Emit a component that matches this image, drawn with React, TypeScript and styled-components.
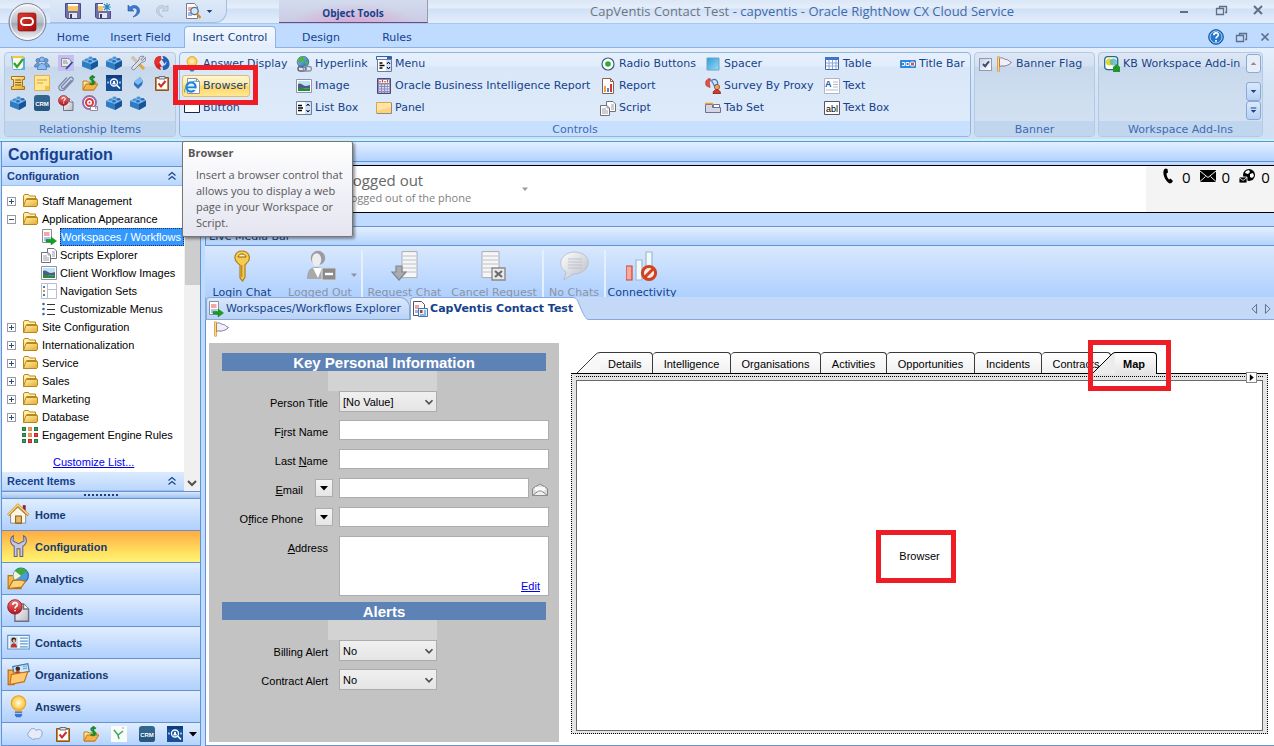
import React from "react";
import styled, { createGlobalStyle, css } from "styled-components";

const UI = `"DejaVu Sans", Verdana, sans-serif`;
const SEGOE = `"Open Sans", "Segoe UI", sans-serif`;
const ARIAL = `"Liberation Sans", Arial, sans-serif`;

const Global = createGlobalStyle`
  *, *::before, *::after { box-sizing: border-box; }
  body { margin: 0; background: #bfdbff; font-family: ${ARIAL}; font-size: 11px; color: #000; }
  button, input, select, textarea { font: inherit; color: inherit; margin: 0; }
  button { background: none; border: 0; padding: 0; cursor: default; white-space: nowrap; }
  ul { list-style: none; margin: 0; padding: 0; }
  h1, h2, p { margin: 0; }
`;

/* ---------- icons ---------- */

const HiddenSvg = styled.svg`
  position: absolute;
`;
const Defs = () => (
  <HiddenSvg width="0" height="0" aria-hidden="true">
    <defs>
      <linearGradient id="gGold" x1="0" y1="0" x2="1" y2="1"><stop offset="0" stopColor="#fff3b0" /><stop offset="1" stopColor="#e5a82e" /></linearGradient>
      <linearGradient id="gBlue" x1="0" y1="0" x2="1" y2="1"><stop offset="0" stopColor="#8ecbf7" /><stop offset="1" stopColor="#1f63b8" /></linearGradient>
      <linearGradient id="gSky" x1="0" y1="0" x2="1" y2="1"><stop offset="0" stopColor="#2f9bd8" /><stop offset="1" stopColor="#9bdcf8" /></linearGradient>
      <linearGradient id="gRed" x1="0" y1="0" x2="0" y2="1"><stop offset="0" stopColor="#f08078" /><stop offset="1" stopColor="#b4101c" /></linearGradient>
      <linearGradient id="gGray" x1="0" y1="0" x2="1" y2="1"><stop offset="0" stopColor="#ffffff" /><stop offset="1" stopColor="#b9bbc6" /></linearGradient>
      <linearGradient id="gOrb" x1="0" y1="0" x2="0" y2="1"><stop offset="0" stopColor="#f4f5f7" /><stop offset="0.5" stopColor="#b9bec8" /><stop offset="0.55" stopColor="#a2a7b3" /><stop offset="1" stopColor="#f8fafc" /></linearGradient>
      <linearGradient id="gOra" x1="0" y1="0" x2="1" y2="1"><stop offset="0" stopColor="#e23a30" /><stop offset="1" stopColor="#a30d0a" /></linearGradient>
      <radialGradient id="gBulb"><stop offset="0" stopColor="#fffbe0" /><stop offset="1" stopColor="#ffc234" /></radialGradient>
    </defs>
  </HiddenSvg>
);

const brick = (
  <>
    <path d="M0 6 8 2.500 16 5.500V11L9 15 0 11.500Z" fill="#2f7cc4" />
    <path d="M0 6 8 2.500 16 5.500 9 9Z" fill="#7db9ec" />
    <path d="M9 9 16 5.500V11L9 15Z" fill="#1a5596" />
    <ellipse cx="4.500" cy="4.800" rx="2" ry="1.300" fill="#4a94d6" /><ellipse cx="8.500" cy="2.800" rx="2" ry="1.300" fill="#4a94d6" />
    <ellipse cx="8" cy="6.300" rx="2" ry="1.300" fill="#2b70b5" /><ellipse cx="12.500" cy="4.300" rx="2" ry="1.300" fill="#2b70b5" />
  </>
);
const docs = (
  <>
    <path d="M6.500 1.500H13L15.500 4V11.500H6.500Z" fill="#fff" stroke="#70707c" />
    <path d="M11 5h3M11 7h3M11 9h3" stroke="#9a9aa6" />
    <path d="M.5 5.500H7L9.500 8V15.500H.5Z" fill="#fff" stroke="#70707c" />
    <path d="M2 9h4M2 11h6M2 13h6M7 5.500V8h2.500" stroke="#9a9aa6" fill="none" />
  </>
);
const picture = (
  <>
    <path d="M.5 1.500h15v13H.5Z" fill="#fff" stroke="#8d94b0" />
    <path d="M2 3h12v10H2Z" fill="#bfe3f7" />
    <path d="M2 6c3-2 5 2 8 2 2 0 3-1 4-1v3H2Z" fill="#4f5a88" /><path d="M2 9.500c4 0 8 1.500 12 .5v3H2Z" fill="#2d8a3c" />
  </>
);
const clipboard = (
  <>
    <path d="M1.500 2.500h13v13h-13Z" fill="#c98a45" stroke="#8f5720" /><path d="M3 4h10v10H3Z" fill="#fff" />
    <path d="M5 1.500h6V4H5Z" fill="#dfe2ea" stroke="#6d7080" /><path d="M4.500 8.500 7 11.500 11.500 6" fill="none" stroke="#cf2b2b" strokeWidth="2" />
  </>
);
const crm = (
  <>
    <rect width="16" height="16" rx="3" fill="#33668f" /><path d="M0 8h16v5a3 3 0 0 1-3 3H3a3 3 0 0 1-3-3Z" fill="#28587f" />
    <text x="8" y="10.500" fontFamily="Liberation Sans" fontWeight="bold" fontSize="6" fill="#fff" textAnchor="middle">CRM</text>
  </>
);
const dollar = (
  <>
    <path d="M1 6h4l1 1h8l-2 8H1Z" fill="url(#gGold)" stroke="#c07f1c" /><path d="M4 9h12l-4 6H1Z" fill="#f7b04a" stroke="#c07f1c" />
    <path d="M13 2.500C9 .5 7 3 9 4.500s4 1.500 3 3.500-3 1.500-4.500.5M10.500 0v10" fill="none" stroke="#1d8a2c" strokeWidth="1.800" />
  </>
);
const lens = (
  <>
    <rect width="16" height="16" fill="#17509a" /><path d="M0 0h16v3H0Z" fill="#0f3d80" />
    <circle cx="8" cy="7.500" r="3.500" fill="none" stroke="#fff" strokeWidth="1.300" /><circle cx="8" cy="7" r="1.200" fill="#fff" /><path d="M6 9.500a2 2 0 0 1 4 0" fill="#fff" />
    <path d="M10.500 10 14 13.500" stroke="#fff" strokeWidth="1.600" /><path d="M1 7.500h2M13 7.500h2" stroke="#8fc0ef" strokeWidth="2" />
  </>
);
const incident = (
  <>
    <path d="M5.500 3.500h6L15 7v8.500H5.500Z" fill="url(#gGray)" stroke="#6f7080" /><path d="M11.500 3.500V7H15" fill="#fff" stroke="#6f7080" />
    <circle cx="5.500" cy="5.500" r="5" fill="url(#gRed)" stroke="#8d1018" strokeWidth=".6" />
    <path d="M4 4.200C4 2 7.200 2 7.200 4 7.200 5.200 5.600 5.200 5.600 6.600M5.600 7.600v1" fill="none" stroke="#fff" strokeWidth="1.100" />
  </>
);
const bulb = (
  <>
    <circle cx="8" cy="5.500" r="5" fill="url(#gBulb)" stroke="#eba21c" strokeWidth=".8" />
    <path d="M5.500 9.500h5v2h-5Z" fill="#f3b334" /><path d="M5.500 11.500h5V14l-1 1.500h-3l-1-1.500Z" fill="#4374c4" /><path d="M5.500 12.800h5" stroke="#b7cdf0" strokeWidth=".7" />
  </>
);
const flag = (
  <>
    <path d="M3.500 2.500c3-2 4 1 7 1 1.500 0 2 1.500 5 3-2 2-3 2.500-5 3-3 1.500-4-.5-7 1Z" fill="#f1effa" stroke="#7b7898" />
    <path d="M2.500.5v15" stroke="#d08a1e" strokeWidth="2.400" /><path d="M2.500 1v14" stroke="#ffd67a" strokeWidth="1" />
  </>
);
const wsArrow = (
  <>
    <path d="M1.500.500h9v13h-9Z" fill="#fff" stroke="#8a8fa8" /><path d="M3 3h5.500v4H3Z" fill="#f4a6a6" /><path d="M3 8h6v4H3Z" fill="#a9c6ee" />
    <path d="M5 10.500h5V8l5.500 4-5.500 4v-3H5Z" fill="#18a022" stroke="#0c7a15" strokeWidth=".5" />
  </>
);
const folder = (
  <>
    <path d="M1.500 12V3l1-1.500h4l1 1.500h6V6" fill="#fff0b0" stroke="#b88718" /><path d="M1.500 4.500v9h13v-8h-10" fill="#fde28a" stroke="#b88718" /><path d="M1.500 13.500 4 6.500h11.500v6l-1 1Z" fill="url(#gGold)" stroke="#b88718" />
  </>
);
const floppy = (
  <>
    <path d="M.5.500h15v15H2L.5 14Z" fill="#6f6fa8" stroke="#4b4b86" /><path d="M3 1h10v7H3Z" fill="#f9c764" /><path d="M3 1h10v2H3Z" fill="#fff" /><path d="M4 10h8v5H4Z" fill="#e6e6f2" /><path d="M5 11h2v4H5Z" fill="#3b3b66" />
  </>
);

const glyphs: Record<string, React.ReactNode> = {
  brick, docs, picture, clipboard, crm, dollar, lens, incident, bulb, flag, wsArrow, folder, floppy,
  floppyStar: (<>{floppy}<path d="M8 0h8v8H8Z" fill="#e8f3fb" /><path d="M9 1l6 6M15 1 9 7M12 0v8M8 4h8" stroke="#2e86c1" strokeWidth="1.200" /></>),
  undo: <path d="M3 2v6h6L6.800 6C9 4 12.500 5 12 8.500 11.700 11 10 12 8 14c5-1.500 7-4 6.500-7C14 2.500 8.500 1 5 4.200Z" fill="#3c7bd6" stroke="#1f55a8" strokeWidth=".6" />,
  redo: <path d="M13 2v6H7l2.200-2C7 4 3.500 5 4 8.500 4.300 11 6 12 8 14 3 12.500 1 10 1.500 7 2 2.500 7.500 1 11 4.200Z" fill="#ccd5e4" stroke="#a9b4c8" strokeWidth=".6" />,
  preview: (<><path d="M1.500.500h8L12.500 4v11.500h-11Z" fill="#fff" stroke="#7a7a8c" /><path d="M3 4h5v4H3Z" fill="#f5a8a8" /><path d="M3 9h4v4H3Z" fill="#9db7e6" /><circle cx="9.500" cy="8" r="3.700" fill="#cfe8fa" stroke="#60708c" strokeWidth="1.300" /><path d="m12 11 3.500 4" stroke="#d68a2a" strokeWidth="2.400" /></>),
  checklist: (<><path d="M1 1h12l2 2v12H3Z" fill="#5aaee0" /><path d="M3 3h10v9l-2 2H3Z" fill="#fdfae0" /><path d="M2 1h12v2H2Z" fill="#e8c94c" /><path d="m4 8 3 4 6-8" fill="none" stroke="#2fa236" strokeWidth="2.200" /></>),
  people: (<g fill="#6d9ed6" stroke="#386ba8" strokeWidth=".7"><circle cx="4" cy="5.500" r="2" /><circle cx="12" cy="5.500" r="2" /><path d="M.5 12c0-5 6-5 6.500 0ZM9 12c0-5 6.500-5 6.500 0Z" /><circle cx="8" cy="4.500" r="2.500" fill="#8fbdf0" /><path d="M3.500 14.500c0-8 9-8 9 0Z" fill="#8fbdf0" /></g>),
  draft: (<><rect width="16" height="16" fill="#c6bdf2" /><path d="M3.500 3.500h6c5 0 5 8 0 8h-6Z" fill="#e9e9ee" stroke="#8c8c98" /><path d="M5 6h4M5 8h5" stroke="#8c8c98" /><path d="m8 14 6.500-7" stroke="#2c4a9e" strokeWidth="1.800" /></>),
  tools: (<><path d="m2 2 12 12" stroke="#e0a93c" strokeWidth="3" /><path d="m2 2 6 6" stroke="#c4c9d4" strokeWidth="2" /><path d="M14 1.500 11 4.500l1.500 1 3-3c1 3-1 5-3.500 4.500L5 14c-2 2-4 0-3-2l7-7C8.500 2 11 .5 14 1.500Z" fill="#d9dee6" stroke="#6a7280" strokeWidth=".8" /></>),
  swirl: (<><path d="M7 1C1 1-.5 6 1 10c1 3 3.500 4.500 6 5L6 12h2L5 7 2 12h2C2.500 8 4 5 7.500 5Z" fill="#d72020" /><path d="M7 1C1 1-.5 6 1 10.500 3 10 5 8 7 5Z" fill="#e03030" /><path d="M9 15c6 0 7.500-5 6-9C14 3 11.500 1 8.500 1L9.500 4h-2l3 5 3.500-5h-2c1.500 4-.5 7-3.500 7Z" fill="#2360b8" /></>),
  scroll: (<><path d="M1.500 1.500h13v3h-2v7h2v3h-13v-3h2v-7h-2Z" fill="url(#gGold)" stroke="#a97312" /><path d="M5 5h6M5 7.500h6M5 10h6" stroke="#8a5d0f" /></>),
  note: (<><path d="M.5.500h15v15H.5Z" fill="#ffe691" stroke="#e5b04a" /><path d="M3 5h10M3 8h6" stroke="#d9a23c" /><path d="M11 11h4v4h-4Z" fill="#f7c04a" /></>),
  clip: <path d="M13.500 5 6 13c-1.500 1.500-3.500-.5-2-2l7.500-8c2-2 5 .5 3 3L6.500 14.500C3 17.500-1.500 13 2 10l7-7.500" fill="none" stroke="#7e84a6" strokeWidth="1.200" />,
  diamond: (<><path d="m4 7 6-5 3 4-1 4-4 4-4-4Z" fill="#2a72c4" /><path d="m4 7 6-5 3 4-5 4Z" fill="#7fbcf0" /></>),
  target: (<><circle cx="7.500" cy="7.500" r="6.500" fill="#fff" stroke="#9d6aa8" strokeWidth="2" /><circle cx="7.500" cy="7.500" r="3.500" fill="#fff" stroke="#d93a3a" strokeWidth="2" /><circle cx="7.500" cy="7.500" r="1" fill="#d93a3a" /><path d="M8.500 11.500h7v4h-7Z" fill="#fff" stroke="#8a8a96" /><path d="M13 12.500h1.500v1H13Z" fill="#d22" /></>),
  browser: (<><path d="M3.500.500h9l3 3v12h-12Z" fill="#fff" stroke="#8a92a8" /><path d="M12.500.500v3h3" fill="none" stroke="#8a92a8" /><circle cx="7" cy="9" r="4.600" fill="#dff2fd" stroke="#1f86d4" strokeWidth="2.300" /><path d="M3 9.300h8.500" stroke="#1f86d4" strokeWidth="1.800" /><path d="M9.500 10.500H13v1.600h-3.500Z" fill="#fff" /><path d="M.8 14.500C-1 11 6 2.500 13 3" fill="none" stroke="#3f9be0" strokeWidth="1" /></>),
  button: <path d="M.5 3.500h15v9H.5Z" fill="#fff" stroke="#17284f" />,
  hyperlink: (<><circle cx="7" cy="6" r="5.800" fill="url(#gBlue)" stroke="#28518c" strokeWidth=".6" /><path d="M3 2c2-1.500 5-1 6 0L8 5 4 7 2 6ZM9 6l3-1v3l-2 2Z" fill="#4cb648" /><rect x="2" y="10.500" width="8" height="4.500" rx="2.200" fill="none" stroke="#5d6577" strokeWidth="1.400" /><rect x="7.500" y="10.500" width="8" height="4.500" rx="2.200" fill="none" stroke="#8b93a5" strokeWidth="1.400" /></>),
  list: (<><path d="M.5 1.500h15v13H.5Z" fill="#fff" stroke="#6f7c98" /><path d="M9 2h6v12H9Z" fill="#cfe0fa" /><path d="M2 5.500h4M2 8h5M2 10.500h4" stroke="#000" strokeWidth="1.300" /><path d="m10.500 6 1.500-2 1.500 2M10.500 10l1.500 2 1.500-2" fill="none" stroke="#000" /></>),
  menu: (<><path d="M.5.500h15v3H.5Z" fill="#eaf3ff" stroke="#2d62a8" /><path d="M11 1h4.500v2H11Z" fill="#2d62a8" /><path d="M1.500 3.500h14v12h-14Z" fill="#fff" stroke="#6f7c98" /><path d="M10 4h5v11h-5Z" fill="#cfe0fa" /><path d="M3.500 7h3M3.500 9.500h5M3.500 12h3" stroke="#000" strokeWidth="1.500" /><path d="m11 8 1.500-2L14 8M11 11l1.500 2 1.500-2" fill="none" stroke="#000" /></>),
  calc: (<><path d="M1.500.500h13v15h-13Z" fill="#8e8bbd" stroke="#4d4a78" /><path d="M3 2h10v3H3Z" fill="#fff" /><path d="M4 4.500V3M6.500 4.500V2M9 4.500V3M11.500 4.500V2" stroke="#d2502e" strokeWidth="1.300" /><path d="M4 6.500v8M7 6.500v8M10 6.500v8M12.500 6.500v8" stroke="#f4f4fc" strokeWidth="1.500" strokeDasharray="1.500 1" /></>),
  panel: (<><path d="M.5 2.500h15v11H.5Z" fill="#ffd37a" stroke="#dfa345" /><path d="M1 3h14v4L1 11Z" fill="#ffe4a8" /><path d="M1 13.500h14.500V3" fill="none" stroke="#8c8a92" /></>),
  radio: (<><circle cx="8" cy="8" r="6" fill="#fdfefd" stroke="#3f5f7a" strokeWidth="1.200" /><circle cx="8" cy="8" r="2.800" fill="#2faa35" /></>),
  report: (<><path d="M2.500.500h8l3 3v12h-11Z" fill="#fff" stroke="#8d5f50" /><path d="M10.500.500v3h3" fill="none" stroke="#8d5f50" /><path d="M4 8h2v6H4Z" fill="#f0a03c" /><path d="M7 10h2v4H7Z" fill="#4e86d2" /><path d="M10 6h2v8h-2Z" fill="#cf3b33" /></>),
  spacer: <path d="M2 2h12v12H2Z" fill="url(#gSky)" stroke="#6aa4c8" />,
  survey: (<><path d="M5 .5C1 .5-.5 5 1.500 8L5 9.500 4.500 6C4 4 5 3 6 2.500Z" fill="#e0524a" stroke="#b02820" strokeWidth=".6" /><path d="M7 2c4-2 7 2 5 5L9 7.500C9 5 6 5 7 2Z" fill="#cfe0fa" stroke="#3c78ca" strokeWidth="1.200" /><circle cx="12" cy="9" r="2.600" fill="#e8a070" stroke="#8d4a1c" strokeWidth=".8" /><path d="M8 15.500c0-5 7.500-5 7.500 0Z" fill="#d93b2a" stroke="#7c1d12" strokeWidth=".8" /></>),
  tabset: (<><path d="M.5 12.500v-8h7v3h8v5Z" fill="#d4d6e6" stroke="#70738e" /><path d="M8.500 7V4.500h6V7" fill="#fff" stroke="#70738e" /><path d="M0 3.500h8" stroke="#f39a2c" strokeWidth="1.500" /></>),
  table: (<><path d="M1.500 1.500h13v12h-13Z" fill="#fff" stroke="#4668a8" /><path d="M1 1h14v3H1Z" fill="#3f76c8" /><path d="M2 7h12M2 10h12M5 4v9M8.500 4v9M12 4v9" stroke="#8da7d8" /></>),
  text: (<><path d="M.5.500h15v15H.5Z" fill="#fff" stroke="#b0b4c6" /><text x="1" y="9" fontFamily="Liberation Sans" fontWeight="bold" fontSize="9" fill="#1b57a6">A</text><path d="M9 4h5M9 6.500h5M9 9h5M2 12h12" stroke="#b6bccd" /></>),
  textbox: (<><path d="M.5 1.500h15v13H.5Z" fill="#fff" stroke="#556" /><text x="8" y="11.500" fontFamily="Liberation Sans" fontSize="9" fill="#000" textAnchor="middle">abl</text></>),
  titlebar: (<><rect y="4" width="16" height="8" rx="1" fill="#2c86e0" /><path d="M2 6.500h2.500v3H2M6 6.500h3v3H6Z" fill="none" stroke="#fff" /><rect x="10.500" y="6" width="4" height="4" rx="1" fill="#e8504a" stroke="#fff" /></>),
  kb: (<><rect x=".7" y=".7" width="13" height="13" rx="3" fill="#fff" stroke="#256b84" strokeWidth="1.300" /><circle cx="5.500" cy="6" r="3.500" fill="#e3d52a" /><circle cx="9.500" cy="6" r="3.500" fill="#4fb4c8" opacity=".8" /><path d="m9 11 3.500-3 3.500 3v5H9Z" fill="#22962c" /></>),
  navset: (<><path d="M.5.500h15v15H.5Z" fill="#fff" stroke="#b9bfd2" /><path d="M6.500 0v16M7 6.500h8" stroke="#b9bfd2" /><path d="M3 3v2M3 11v2" stroke="#4a76c4" strokeWidth="2" /><path d="M3 7v2" stroke="#e39a2c" strokeWidth="2" /></>),
  bullets: (<><g fill="#3c67ad"><circle cx="2.500" cy="3" r="1.300" /><circle cx="2.500" cy="8" r="1.300" /><circle cx="2.500" cy="13" r="1.300" /></g><path d="M6 3.500h8M6 8.500h8M6 13.500h8" stroke="#333" /></>),
  rules: (<g strokeWidth="1.400"><path d="M.7.700h2.600v2.600H.7ZM.7 6.700h2.600v2.600H.7ZM.7 12.700h2.600v2.600H.7ZM12.700.700h2.600v2.600h-2.600ZM12.700 12.700h2.600v2.600h-2.600Z" fill="#a8d8b4" stroke="#1f7a44" /><path d="M6.700.700h2.600v2.600H6.700ZM6.700 6.700h2.600v2.600H6.700Z" fill="#fbd8a8" stroke="#e8884a" /><path d="M12.700 6.700h2.600v2.600h-2.600ZM6.700 12.700h2.600v2.600H6.700Z" fill="#f7a0a0" stroke="#d22222" /></g>),
  home: (<><path d="M11 1.500h2V6h-2Z" fill="#8c2430" /><path d="M2.500 7.500 7.500 3l5.500 5v6H2.500Z" fill="#fdf6e4" stroke="#7b7b86" strokeWidth=".6" /><path d="M.8 8.500 7.500 1.500l7.500 7" fill="none" stroke="#c98a1c" strokeWidth="1.900" /><path d="M.8 8.300 7.500 1.300l7.500 7" fill="none" stroke="#fbe08a" strokeWidth=".8" /><path d="M6 9h4v5H6Z" fill="#e4bd6c" stroke="#8a5a12" strokeWidth=".7" /></>),
  wrench: <path d="M4.500.500C2 1.500 1.500 6 5 7.800V15h2V9.500h2V15h2V7.800C14.500 6 14 1.500 11.500.500l.3 3.700L8 6 4.200 4.200Z" fill="#c5c8de" stroke="#5d6088" strokeWidth=".7" />,
  analytics: (<><path d="M.8 6h4l1 1h4v8h-9Z" fill="#f7b84a" stroke="#b87518" strokeWidth=".8" /><circle cx="9.700" cy="6" r="5.200" fill="#4b9ae0" stroke="#2c6cae" strokeWidth=".8" /><path d="M9.700 6 5.500 2.800a5.200 5.200 0 0 1 8.400 0Z" fill="#3cab3c" /><path d="M9.700 6 5.500 2.800A5.200 5.200 0 0 0 5.500 9Z" fill="#f0f4d8" /><path d="M4 9.500 9 9l4 1-3 4-9 1Z" fill="#ffd27a" stroke="#b87518" strokeWidth=".8" /></>),
  contacts: (<><path d="M.5 3h15v9.500H.5Z" fill="#f6fbff" stroke="#5d93c8" strokeWidth=".8" /><path d="M2 4h5.500v7.500H2Z" fill="#c4dcf2" /><circle cx="4.700" cy="6.300" r="1.700" fill="#3c1d14" /><circle cx="4.900" cy="6.800" r="1" fill="#e8b890" /><path d="M2.500 11.500c0-4 4.500-4 4.500 0Z" fill="#b83232" /><path d="M9 5h5.500M9 7h5.500M9 9h5.500M9 11h5.500" stroke="#5b9bd6" strokeWidth=".8" /></>),
  orgs: (<><path d="m4 2.500 10.500-2L15.500 6 5 8Z" fill="#cfe6fa" stroke="#3a78b8" strokeWidth=".8" /><circle cx="7.500" cy="4" r="1.600" fill="#4a2414" /><path d="M5.500 7c.5-2 3.500-2 4 0Z" fill="#b83232" /><path d="M11 2.500l3-.5M11 4l3-.5" stroke="#5b9bd6" strokeWidth=".7" /><path d="M.8 5h3l1 1.500V15h-4Z" fill="#f7b04a" stroke="#b86c18" strokeWidth=".8" /><path d="m3 8 11.500-2L12 13 2 15Z" fill="#ffca70" stroke="#c46f18" strokeWidth=".8" /></>),
  cloud: <path d="M3.500 11.500C0 11 0 6.500 2.500 5.500 3 2 8 1.500 9 4.500c3.500-2.500 7 .5 6 3.500-.5 4-4 5.500-6.500 4.500-2 1.500-4 1-5-1Z" fill="#e6ebfa" stroke="#8ea0cc" />,
  ticks: (<><rect width="16" height="16" fill="#f8fbf8" /><path d="m3 4 4 5 5-4M7 9l1 4" stroke="#3aa85c" strokeWidth="1.500" fill="none" /><path d="M11 2h2" stroke="#8ac" /></>),
  help: (<><circle cx="8" cy="8" r="7.300" fill="#2477cf" stroke="#1a4b8c" /><circle cx="8" cy="8" r="6" fill="none" stroke="#cfe6fb" strokeWidth=".8" /><path d="M5.800 6.300C5.800 3 10.500 3.200 10.300 6 10.200 7.500 8 7.800 8 9.500M8 11v1.700" fill="none" stroke="#fff" strokeWidth="1.700" /></>),
  phone: <path d="M5.500.5 4 1.500C2 5.500 5 13 9.500 15.500l2-.5 1.500-2-2.500-2.500-1.500 1C7.500 10 6.500 7.500 6.500 5.500L8 4.500 7.500 1Z" fill="#000" />,
  mail: (<><path d="M0 2h16v12H0Z" fill="#000" /><path d="m0 3 8 6.500L16 3M0 13.500l5.500-5M16 13.500l-5.500-5" fill="none" stroke="#f4f4f4" strokeWidth="1" /></>),
  globe: (<><circle cx="10" cy="7" r="6" fill="#000" /><path d="M7 3l3-1 1 2-2 2-3-1ZM11 6l3-1 1 3-2 2-2-1Z" fill="#fff" /><path d="M0 9h8v6H0Z" fill="#000" stroke="#fff" strokeWidth=".8" /><path d="m0 9.500 4 3 4-3" fill="none" stroke="#fff" strokeWidth=".8" /></>),
  openMail: (<><path d="M.5 7.500 8 3l7.500 4.500v7H.5Z" fill="#dcdcdc" stroke="#8a8a8a" /><path d="M3 6h10v3.500L8 11 3 9.500Z" fill="#fafafa" /><path d="m.5 14.500 6-4.500h3l6 4.500Z" fill="#efefef" stroke="#8a8a8a" /></>),
  contactDoc: (<><path d="M1.500.500h8l3 3v11h-11Z" fill="#fff" stroke="#55506a" /><path d="M3 4h4v4H3Z" fill="#f3a0a0" /><path d="M3 9h3v3H3Z" fill="#9db7e6" /><path d="M6.500 7.500h9v8h-9Z" fill="#e6f4ff" stroke="#3c78b4" /><path d="M8 9h2.500v3H8Z" fill="#a8402a" /><path d="M12 10h2M12 12h2M8 14h6" stroke="#3c78b4" /></>),
  caret: <path d="M4 6h8l-4 4.500Z" fill="currentColor" />,
  caretUp: <path d="M3 10.500h10L8 5.500Z" fill="currentColor" />,
  caretBig: <path d="M3 5.500h10l-5 5Z" fill="currentColor" />,
  more: <path d="M3 2.500h10v2H3ZM3 7h10l-5 5Z" fill="currentColor" />,
  dblUp: <path d="m4.500 7.500 3.500-3 3.500 3M4.500 11.500l3.500-3 3.500 3" fill="none" stroke="currentColor" strokeWidth="1.100" />,
  chevDown: <path d="m4 6 4 4 4-4" fill="none" stroke="currentColor" strokeWidth="2" />,
  triLeft: <path d="M10.500 3v11L5 8.500Z" fill="none" stroke="currentColor" />,
  triRight: <path d="M5.500 3v11L11 8.500Z" fill="none" stroke="currentColor" />,
  play: <path d="M5 2v12L12 8Z" fill="currentColor" />,
  min: <path d="M4 10h8" stroke="currentColor" strokeWidth="2" />,
  restore: <path d="M6.500 6V4.500h7v6H12M3.500 6.500h7v6h-7Z" fill="none" stroke="currentColor" strokeWidth="1.300" />,
  close: <path d="m4 4 8 8M12 4l-8 8" stroke="currentColor" strokeWidth="2" />,
  key: (<><path d="M8 .5c3.500 0 5 4 2.200 6.200L9.500 7.500v6L8.300 15.500 7 14V7.500l-1-.8C3.200 4.500 4.500.5 8 .5Z" fill="#f7cb52" stroke="#b07f14" strokeWidth=".6" /><path d="M6 3.500h4C9.500 1.500 6.500 1.500 6 3.500Z" fill="#fdf3c8" stroke="#8a6210" strokeWidth=".5" /><path d="M7.900 7.500v6" stroke="#a8770f" strokeWidth=".5" /></>),
  agent: (<><circle cx="7" cy="4" r="3.600" fill="#9c9ca0" /><ellipse cx="6.300" cy="4.800" rx="2.300" ry="3.200" fill="#ededed" /><path d="M1.500 14.500c0-5 2-6 5-6s5 2 5 6Z" fill="#a9a9ac" /><path d="m4.500 9 2.500 5 2-5Z" fill="#fff" /><path d="M9 9h7v6H9Z" fill="#8b8b8e" stroke="#d6d6d8" strokeWidth=".6" /><path d="M10.500 12h4" stroke="#fff" strokeWidth="1.200" /></>),
  request: (<><path d="M7 .8h7.500v13H7Z" fill="#f6f6f6" stroke="#a8adb8" strokeWidth=".5" /><path d="M7.500 3h6.500M7.500 5h6.500M7.500 7h6.500M7.500 9h6.500M7.500 11h6.500" stroke="#cfd2d8" strokeWidth=".7" /><path d="M4 8h3v3h2l-3.500 4L2 11h2Z" fill="#a9abb2" stroke="#84868e" strokeWidth=".6" /></>),
  cancel: (<><path d="M2 .8h8.500v13H2Z" fill="#f6f6f6" stroke="#a8adb8" strokeWidth=".5" /><path d="M2.500 3H10M2.500 5H10M2.500 7H10M2.500 9H7M2.500 11H7" stroke="#cfd2d8" strokeWidth=".7" /><path d="M7 9h6.500v6H7Z" fill="#e9e9e9" stroke="#8a8a8e" strokeWidth=".7" /><path d="m8.500 10.500 3.500 3M12 10.500l-3.500 3" stroke="#6b6b6e" strokeWidth="1.100" /></>),
  chats: (<><path d="M8.500 1C18 1.500 17 12 7.500 12L3 15l1-4C-1 8 1.500 1 8.500 1Z" fill="url(#gGray)" stroke="#b4b7be" strokeWidth=".4" /><path d="M5 4.500h7M5 6h7M5 7.500h7M5 9h7" stroke="#b9bbc2" strokeWidth=".4" /></>),
  bars: (<><path d="M0 8h3v7H0Z" fill="#f5a89e" stroke="#d0432c" strokeWidth=".6" /><path d="M5 5h3v10H5ZM10 1h3v14h-3Z" fill="#eefaff" stroke="#a2b8c4" strokeWidth=".6" /><circle cx="11.500" cy="11.500" r="3.300" fill="#fdeae4" stroke="#cf4320" strokeWidth="1.500" /><path d="m9.500 13.500 4-4" stroke="#cf4320" strokeWidth="1.500" /></>),
};

const Svg = styled.svg`
  display: block;
  flex: none;
`;
const Icon = ({ name, size = 16 }: { name: string; size?: number }) => (
  <Svg width={size} height={size} viewBox="0 0 16 16" aria-hidden="true">{glyphs[name]}</Svg>
);

/* ---------- frame ---------- */

const Page = styled.div`
  display: flex;
  flex-direction: column;
  min-height: 100vh;
`;

const TitleBar = styled.header`
  position: relative;
  display: flex;
  height: 24px;
  padding-left: 50px;
  background: linear-gradient(#dbe7f6 0, #e6eefa 8px, #cfe0f6 9px, #e2edfb 22px);
  border-bottom: 1px solid #a8c8f2;
`;
const Orb = styled.button`
  position: absolute;
  left: 8px;
  top: 2px;
  z-index: 3;
`;
const QuickAccess = styled.div`
  display: flex;
  align-items: center;
  width: 177px;
  height: 23px;
  padding: 0 10px 0 15px;
  gap: 14px;
  background: linear-gradient(#dde9f8, #cfdff4);
  border: 1px solid #a3bfe4;
  border-width: 0 1px 1px 0;
  border-radius: 0 0 12px 0;
  color: #15428b;
`;
const QuickButton = styled.button`
  display: flex;
`;
const ContextTitle = styled.div`
  width: 149px;
  margin-left: 52px;
  padding-top: 4px;
  text-align: center;
  font: bold 10px/18px ${SEGOE};
  color: #15428b;
  background: radial-gradient(ellipse at 50% 110%, #d9a8d0, transparent 60%), linear-gradient(#d3dbee, #cbcce4);
  border-right: 1px solid #9a9aa8;
  border-bottom: 1px solid #6f4a80;
`;
const WindowTitle = styled.h1`
  flex: 1;
  font: 13px/22px ${SEGOE};
  text-align: center;
  color: #3e6aaa;
  white-space: nowrap;
`;
const DocName = styled.span`
  color: #6d7582;
`;
const WindowButtons = styled.div`
  display: flex;
  gap: 21px;
  align-items: center;
  height: 20px;
  padding-right: 8px;
  color: #606f88;
`;

const TabStrip = styled.nav`
  display: flex;
  height: 24px;
  padding: 2px 2px 0 50px;
  background: #bfdbff;
  border-bottom: 1px solid #8db2e3;
  font: 11px/20px ${UI};
  color: #15428b;
`;
const RibbonTab = styled.button<{ $w: number; $active?: boolean }>`
  width: ${(p) => p.$w}px;
  height: 22px;
  border: 1px solid transparent;
  border-bottom: 0;
  ${(p) =>
    p.$active &&
    css`
      background: linear-gradient(#f3f8fe, #e3eefb);
      border-color: #8db2e3;
      border-radius: 4px 4px 0 0;
      margin: 0 3px 0 -1px;
    `}
`;
const StripTools = styled.div`
  display: flex;
  align-items: center;
  gap: 9px;
  margin-left: auto;
  color: #5d6f8c;
`;

const Ribbon = styled.section`
  display: flex;
  gap: 3px;
  height: 94px;
  padding: 4px 11px 4px 4px;
  background: linear-gradient(#e6f0fc, #d5e3f6 40%, #cfdff4);
  border-bottom: 1px solid #5f93d2;
  box-shadow: inset 0 -2px #c8f2fc;
  font: 11px/16px ${UI};
  color: #15428b;
`;
const Group = styled.div<{ $w?: number; $lit?: boolean }>`
  position: relative;
  display: flex;
  flex-direction: column;
  flex: ${(p) => (p.$w ? `0 0 ${p.$w}px` : "1 1 0")};
  min-width: 0;
  border: 1px solid ${(p) => (p.$lit ? "#8fb6e0" : "#b4c9e2")};
  border-radius: 4px;
  background: ${(p) =>
    p.$lit ? "linear-gradient(#e6f0fc 0, #e2edfb 13px, #d9e7f8 14px, #dfebfa)" : "linear-gradient(#dce6f4 0, #d5e1f1 13px, #c8d8ec 14px, #d5e3f3)"};
`;
const GroupBody = styled.div`
  flex: 1;
`;
const GroupLabel = styled.div<{ $lit?: boolean }>`
  height: 15px;
  line-height: 17px;
  text-align: center;
  color: #4169b4;
  border-radius: 0 0 3px 3px;
  background: ${(p) => (p.$lit ? "#c8e0ff" : "#c0d6ef")};
`;
const IconGrid = styled.div`
  display: grid;
  grid-template-columns: repeat(7, 24px);
  grid-auto-rows: 20px;
  padding: 0 0 0 1px;
`;
const IconButton = styled.button`
  display: grid;
  place-items: center;
`;
const ControlsGrid = styled.div`
  display: grid;
  grid-template-columns: 112px 80px 224px 105px 119px 76px 1fr;
  grid-template-rows: repeat(3, 22px);
  grid-auto-flow: column;
  padding: 0 0 0 2px;
`;
const Cell = styled.div`
  position: relative;
  display: flex;
  align-items: center;
`;
const Control = styled.button<{ $hot?: boolean }>`
  display: flex;
  align-items: center;
  gap: 3px;
  height: 22px;
  padding: 0 1px;
  border: 1px solid transparent;
  ${(p) =>
    p.$hot &&
    css`
      border-color: #d8bf78;
      border-radius: 3px;
      background: linear-gradient(#fff6d0, #ffe9a0 45%, #ffd65c 50%, #ffe794);
    `}
`;
const Mark = styled.span<{ $x: number; $y: number; $w: number; $h: number }>`
  position: absolute;
  left: ${(p) => p.$x}px;
  top: ${(p) => p.$y}px;
  width: ${(p) => p.$w}px;
  height: ${(p) => p.$h}px;
  border: 5px solid #ee1c25;
  z-index: 5;
  pointer-events: none;
`;
const Tooltip = styled.div`
  position: absolute;
  left: 0;
  top: 66px;
  z-index: 20;
  width: 171px;
  height: 96px;
  padding: 3px 5px;
  background: linear-gradient(#fff, #e4e5f0);
  border: 1px solid #767676;
  border-radius: 2px;
  box-shadow: 2px 2px 3px rgba(0, 0, 0, 0.4);
  font: 11px/16px ${SEGOE};
  color: #575757;
`;
const TipTitle = styled.p`
  font-weight: bold;
`;
const TipText = styled.p`
  margin: 6px 0 0 8px;
  white-space: nowrap;
`;
const BannerOption = styled.label`
  display: flex;
  align-items: center;
  gap: 4px;
  height: 22px;
  padding-left: 4px;
`;
const Tick = styled.input`
  appearance: none;
  width: 13px;
  height: 13px;
  margin: 0;
  border: 1px solid #8e9bb0;
  background: linear-gradient(135deg, #c9d2e0, #fff);
  display: grid;
  place-items: center;
  &:checked::after {
    content: "";
    width: 4px;
    height: 7px;
    margin-top: -2px;
    border: solid #3c4c78;
    border-width: 0 2px 2px 0;
    transform: rotate(40deg);
  }
`;
const AddInRow = styled.div`
  display: flex;
  justify-content: space-between;
  padding: 0 1px 0 3px;
`;
const Scroller = styled.div`
  display: flex;
  flex-direction: column;
  padding-top: 1px;
`;
const ScrollButton = styled.button<{ $gap?: boolean; $pale?: boolean }>`
  display: grid;
  place-items: center;
  width: 15px;
  height: 19px;
  margin-bottom: ${(p) => (p.$gap ? 9 : 0)}px;
  border: 1px solid #8aa9d4;
  border-radius: 3px;
  color: ${(p) => (p.$pale ? "#8c8c94" : "#15428b")};
  background: ${(p) => (p.$pale ? "#e8eef7" : "linear-gradient(#dce9fb, #b5d0f5)")};
`;

/* ---------- left pane ---------- */

const Body = styled.div`
  display: flex;
  flex: 1;
`;
const Side = styled.aside`
  display: flex;
  flex-direction: column;
  flex: 0 0 200px;
  margin: 0 4px 0 1px;
  border: 1px solid #6593cf;
  border-top: 0;
  background: #fff;
`;
const SideTitle = styled.h2`
  height: 25px;
  padding-left: 6px;
  font: bold 16px/25px ${ARIAL};
  color: #15428b;
  background: linear-gradient(#e3efff, #afd2ff);
  border-bottom: 1px solid #6593cf;
`;
const SideScroll = styled.div`
  display: flex;
  flex: 1;
`;
const Sections = styled.div`
  display: flex;
  flex-direction: column;
  flex: 1;
  min-width: 0;
`;
const SectionHead = styled.button`
  display: flex;
  align-items: center;
  justify-content: space-between;
  height: 19px;
  padding: 0 4px 0 5px;
  font-weight: bold;
  color: #15428b;
  background: linear-gradient(#dcebff, #bad7fe);
  border-bottom: 1px solid #9dbfee;
`;
const Track = styled.div`
  display: flex;
  flex-direction: column;
  align-items: center;
  justify-content: space-between;
  width: 16px;
  background: #f0f0f0;
  color: #505050;
`;
const Thumb = styled.div`
  width: 15px;
  height: 101px;
  margin-top: 17px;
  background: #cdcdcd;
`;
const Tree = styled.ul`
  flex: 1;
  padding: 6px 0 0 5px;
  overflow: hidden;
`;
const TreeRow = styled.li<{ $child?: boolean; $plain?: boolean }>`
  display: flex;
  align-items: center;
  height: 18px;
  gap: ${(p) => (p.$child ? 3 : 4)}px;
  padding-left: ${(p) => (p.$child ? 34 : p.$plain ? 15 : 0)}px;
  white-space: nowrap;
`;
const Expander = styled.button`
  display: grid;
  place-items: center;
  width: 9px;
  height: 9px;
  margin-right: 2px;
  border: 1px solid #9a9a9a;
  background: #fff;
`;
const Label = styled.span<{ $selected?: boolean }>`
  line-height: 18px;
  ${(p) =>
    p.$selected &&
    css`
      flex: 1 0 auto;
      height: 18px;
      line-height: 16px;
      color: #fff;
      background: #3399ff;
      border: 1px dotted #2a2a50;
    `}
`;
const TreeFoot = styled.li`
  padding: 9px 0 0 46px;
  line-height: 18px;
`;
const Link = styled.a`
  color: #0000f0;
`;
const Grip = styled.div`
  display: grid;
  place-items: center;
  height: 8px;
  background: linear-gradient(#d8e7fc, #9dc1f2);
  border-top: 1px solid #6593cf;
  border-bottom: 1px solid #6593cf;
`;
const Dots = styled.span`
  width: 35px;
  height: 2px;
  background: repeating-linear-gradient(90deg, #1c3f7c 0 2px, transparent 2px 4px);
`;
const NavButton = styled.button<{ $active?: boolean }>`
  display: flex;
  align-items: center;
  gap: 5px;
  height: 32px;
  padding: 0 5px;
  font-weight: bold;
  color: #163a70;
  border-bottom: 1px solid #6593cf;
  background: ${(p) => (p.$active ? "linear-gradient(#ffac42, #ffe966 80%, #fff27a)" : "linear-gradient(#e0edff, #b0d0fd)")};
`;
const SideTools = styled.div`
  display: flex;
  align-items: center;
  justify-content: flex-end;
  gap: 12px;
  height: 22px;
  background: linear-gradient(#e0edff, #b5d3fd);
`;
const SmallCaret = styled(IconButton)`
  margin: 0 -1px 0 -10px;
`;

/* ---------- main pane ---------- */

const Main = styled.main`
  display: flex;
  flex-direction: column;
  flex: 1;
  min-width: 0;
`;
const BarHead = styled.div`
  height: 20px;
  padding-left: 3px;
  line-height: 20px;
  color: #15428b;
  background: linear-gradient(#e3efff, #b3d3ff);
  border: solid #6593cf;
  border-width: 0 0 1px 1px;
  font-family: ${UI};
`;
const StatusBar = styled.section`
  display: flex;
  justify-content: space-between;
  height: 48px;
  margin-top: 3px;
  background: #fff;
  border: solid #000;
  border-width: 1px 0;
`;
const Status = styled.div`
  display: flex;
  align-items: center;
  gap: 48px;
  padding-left: 140px;
  color: #9a9a9a;
`;
const StatusText = styled.div`
  font: 11px/18px ${SEGOE};
  color: #808080;
`;
const StatusTitle = styled.p`
  font-size: 15px;
  color: #666;
`;
const Counters = styled.div`
  display: flex;
  gap: 9px;
  width: 128px;
  padding: 2px 4px 0 14px;
  background: #f4f4f4;
  font: 15px/18px ${SEGOE};
`;
const Counter = styled.span`
  display: flex;
  gap: 6px;
`;
const MediaHead = styled(BarHead)`
  margin-top: 13px;
  border-top-width: 1px;
`;
const MediaBar = styled.div`
  display: flex;
  height: 51px;
  padding-top: 4px;
  overflow: hidden;
  background: linear-gradient(#d9e8fd, #aed0ff);
  font: 11px/14px ${UI};
`;
const MediaItem = styled.div<{ $w: number; $split?: boolean }>`
  position: relative;
  display: flex;
  justify-content: center;
  flex: 0 0 ${(p) => p.$w}px;
  border-right: ${(p) => (p.$split ? "2px solid #e4f0ff" : "0")};
`;
const MediaButton = styled.button<{ $off?: boolean }>`
  display: flex;
  flex-direction: column;
  align-items: center;
  gap: 4px;
  color: ${(p) => (p.$off ? "#8d93a3" : "#15428b")};
`;
const ItemCaret = styled.button`
  position: absolute;
  right: 1px;
  top: 19px;
  color: #8d93a3;
`;
const DocTabs = styled.div`
  display: flex;
  align-items: stretch;
  height: 23px;
  background: #c3d9f7;
  border: solid #8ba9d6;
  border-width: 0 0 1px 1px;
  font: 11px/20px ${UI};
  color: #15428b;
`;
const DocTab = styled.button<{ $active?: boolean }>`
  display: flex;
  align-items: center;
  gap: 2px;
  height: ${(p) => (p.$active ? 23 : 22)}px;
  padding: 0 8px 0 1px;
  border: 1px solid #8ba9d6;
  border-bottom: 0;
  border-radius: 4px 10px 0 0;
  background: linear-gradient(#d8e7fb, #b9d3f6);
  ${(p) =>
    p.$active &&
    css`
      padding: 0 0 0 1px;
      background: #fff;
      border-right: 0;
      border-radius: 4px 0 0 0;
      font-weight: bold;
    `}
`;
const TabArrows = styled.div`
  display: flex;
  align-items: center;
  margin-left: auto;
  color: #4d5a70;
`;
const Canvas = styled.div`
  flex: 1;
  display: flex;
  flex-direction: column;
  padding: 1px 6px 3px 3px;
  background: #fff;
  border: solid #6593cf;
  border-width: 0 0 1px 1px;
`;
const FlagRow = styled.div`
  height: 22px;
  padding-left: 4px;
`;
const Columns = styled.div`
  display: flex;
  flex: 1;
  gap: 12px;
`;

/* ---------- form ---------- */

const Form = styled.form`
  flex: 0 0 350px;
  padding-top: 10px;
  background: #c3c3c3;
`;
const FormHead = styled.h2`
  height: 18px;
  margin: 0 13px;
  font: bold 15px/20px ${ARIAL};
  text-align: center;
  color: #fff;
  background: #5d82b5;
`;
const Spacer = styled.div`
  width: 109px;
  height: 20px;
  margin-left: 119px;
  background: #d3d3d3;
`;
const Field = styled.div<{ $tall?: boolean }>`
  display: flex;
  height: ${(p) => (p.$tall ? 60 : 20)}px;
  margin-bottom: ${(p) => (p.$tall ? 6 : 9)}px;
`;
const FieldLabel = styled.div<{ $menu?: boolean }>`
  display: flex;
  justify-content: flex-end;
  gap: 12px;
  width: 130px;
  padding-right: ${(p) => (p.$menu ? 6 : 11)}px;
  line-height: 24px;
`;
const inputLook = css`
  border: 1px solid #abadb3;
  border-radius: 0;
  background: #fff;
  outline: 0;
  padding: 0 3px;
`;
const TextInput = styled.input<{ $w?: number }>`
  ${inputLook}
  width: ${(p) => p.$w ?? 210}px;
  height: 20px;
`;
const SelectBox = styled.span`
  position: relative;
  color: #505050;
`;
const Select = styled.select`
  appearance: none;
  display: block;
  width: 98px;
  height: 21px;
  padding: 0 3px;
  color: #000;
  border: 1px solid #acacac;
  border-radius: 0;
  background: linear-gradient(#f0f0f0, #e5e5e5);
`;
const SelectArrow = styled.span`
  position: absolute;
  right: 1px;
  top: 4px;
  pointer-events: none;
`;
const MenuButton = styled.button`
  display: grid;
  place-items: center;
  width: 18px;
  height: 18px;
  margin-top: 1px;
  border: 1px solid #acacac;
  background: linear-gradient(#f4f4f4, #e5e5e5);
`;
const MailButton = styled.button`
  padding: 2px 0 0 3px;
`;
const AddressBox = styled.div`
  ${inputLook}
  position: relative;
  width: 210px;
  height: 60px;
  padding: 0;
`;
const AddressText = styled.textarea`
  display: block;
  width: 100%;
  height: 100%;
  border: 0;
  outline: 0;
  resize: none;
`;
const EditLink = styled(Link)`
  position: absolute;
  right: 8px;
  bottom: 3px;
`;

/* ---------- tab set ---------- */

const TabSet = styled.section`
  flex: 1;
  display: flex;
  flex-direction: column;
  min-width: 0;
  margin: 9px 0 8px;
`;
const Tabs = styled.div`
  display: flex;
  height: 21px;
  padding-left: 5px;
`;
const SetTab = styled.button<{ $w: number }>`
  position: relative;
  width: ${(p) => p.$w}px;
  height: 21px;
  padding-top: 1px;
  border: 1px solid #3a3a3a;
  border-width: 1px 1px 0 0;
  border-radius: 4px 4px 0 0;
  background: linear-gradient(#fff, #f0f0f0);
`;
const Slant = styled.svg`
  display: block;
  flex: none;
  z-index: 1;
`;
const SlantTab = styled(SetTab)<{ $active?: boolean }>`
  border-left: 0;
  border-radius: 0 4px 0 0;
  text-align: left;
  padding-left: 8px;
  ${(p) =>
    p.$active &&
    css`
      z-index: 1;
      font-weight: bold;
      height: 22px;
      border-color: #000;
      background: linear-gradient(#fff, #e4e4e4);
    `}
`;
const MapTab = styled.div`
  position: relative;
  display: flex;
  margin-left: -18px;
`;
const Frame = styled.div`
  position: relative;
  flex: 1;
  display: flex;
  padding: 2px 4px 2px;
  background: #e4e4e4;
  border: 1px solid #000;
  border-style: solid dotted dotted;
`;
const FrameInner = styled.div`
  flex: 1;
  display: flex;
  border-top: 1px dotted #000;
  padding-top: 3px;
`;
const BrowserArea = styled.div`
  flex: 1;
  display: grid;
  place-items: center;
  background: #fff;
  border: 1px solid #6a6a6a;
`;
const Placeholder = styled.span`
  position: relative;
`;
const FrameArrow = styled.button`
  position: absolute;
  right: 11px;
  top: -1px;
  width: 9px;
  height: 9px;
  background: #fff;
  outline: 1px solid #888;
`;

/* ---------- data ---------- */

const relationship = [
  ["checklist", "Tasks"], ["people", "Contacts"], ["draft", "Drafts"], ["brick", "Add-in 1"], ["brick", "Add-in 2"], ["tools", "Tools"], ["swirl", "Surveys"],
  ["scroll", "Audit log"], ["note", "Notes"], ["clip", "Attachments"], ["dollar", "Opportunities"], ["lens", "Search"], ["diamond", "Products"], ["clipboard", "Task list"],
  ["brick", "Add-in 3"], ["crm", "CRM"], ["incident", "Incidents"], ["target", "Campaigns"], ["brick", "Add-in 4"], ["brick", "Add-in 5"],
];
const controls: [string, string][] = [
  ["bulb", "Answer Display"], ["browser", "Browser"], ["button", "Button"],
  ["hyperlink", "Hyperlink"], ["picture", "Image"], ["list", "List Box"],
  ["menu", "Menu"], ["calc", "Oracle Business Intelligence Report"], ["panel", "Panel"],
  ["radio", "Radio Buttons"], ["report", "Report"], ["docs", "Script"],
  ["spacer", "Spacer"], ["survey", "Survey By Proxy"], ["tabset", "Tab Set"],
  ["table", "Table"], ["text", "Text"], ["textbox", "Text Box"],
  ["titlebar", "Title Bar"],
];
const tree: { t: string; icon: string; kind: "open" | "closed" | "child" | "plain"; sel?: boolean }[] = [
  { t: "Staff Management", icon: "folder", kind: "closed" },
  { t: "Application Appearance", icon: "folder", kind: "open" },
  { t: "Workspaces / Workflows", icon: "wsArrow", kind: "child", sel: true },
  { t: "Scripts Explorer", icon: "docs", kind: "child" },
  { t: "Client Workflow Images", icon: "picture", kind: "child" },
  { t: "Navigation Sets", icon: "navset", kind: "child" },
  { t: "Customizable Menus", icon: "bullets", kind: "child" },
  { t: "Site Configuration", icon: "folder", kind: "closed" },
  { t: "Internationalization", icon: "folder", kind: "closed" },
  { t: "Service", icon: "folder", kind: "closed" },
  { t: "Sales", icon: "folder", kind: "closed" },
  { t: "Marketing", icon: "folder", kind: "closed" },
  { t: "Database", icon: "folder", kind: "closed" },
  { t: "Engagement Engine Rules", icon: "rules", kind: "plain" },
];
const nav = [
  ["home", "Home"], ["wrench", "Configuration"], ["analytics", "Analytics"], ["incident", "Incidents"],
  ["contacts", "Contacts"], ["orgs", "Organizations"], ["bulb", "Answers"],
];
const sideTools = [["cloud", "Chat"], ["clipboard", "Tasks"], ["dollar", "Opportunities"], ["ticks", "Surveys"], ["crm", "CRM"], ["lens", "Search"]];
const setTabs: [string, number][] = [["Intelligence", 78], ["Organisations", 90], ["Activities", 66], ["Opportunities", 88], ["Incidents", 67], ["Contracts", 69]];

const SelectField = ({ id, label, options }: { id: string; label: string; options: string[] }) => (
  <Field>
    <FieldLabel><label htmlFor={id}>{label}</label></FieldLabel>
    <SelectBox>
      <Select id={id} defaultValue={options[0]}>{options.map((o) => <option key={o}>{o}</option>)}</Select>
      <SelectArrow><Icon name="chevDown" size={14} /></SelectArrow>
    </SelectBox>
  </Field>
);

export default function App() {
  return (
    <Page>
      <Global />
      <Defs />
      <TitleBar>
        <Orb aria-label="Application menu">
          <Svg width="40" height="40" viewBox="0 0 40 40">
            <circle cx="19.500" cy="20" r="18.500" fill="url(#gOrb)" stroke="#76829a" />
            <circle cx="19.500" cy="20" r="17" fill="none" stroke="#fff" strokeOpacity=".7" strokeWidth="1.200" />
            <rect x="10" y="11" width="18" height="18" rx="2" fill="url(#gOra)" stroke="#7d0a08" strokeWidth=".6" />
            <rect x="13" y="16" width="12" height="7" rx="3.500" fill="none" stroke="#fff" strokeWidth="2" />
          </Svg>
        </Orb>
        <QuickAccess>
          <QuickButton aria-label="Save"><Icon name="floppy" /></QuickButton>
          <QuickButton aria-label="Save as"><Icon name="floppyStar" /></QuickButton>
          <QuickButton aria-label="Undo"><Icon name="undo" /></QuickButton>
          <QuickButton aria-label="Redo"><Icon name="redo" /></QuickButton>
          <QuickButton aria-label="Preview"><Icon name="preview" /></QuickButton>
          <SmallCaret aria-label="Customize toolbar"><Icon name="caretBig" size={9} /></SmallCaret>
        </QuickAccess>
        <ContextTitle>Object Tools</ContextTitle>
        <WindowTitle><DocName>CapVentis Contact Test</DocName> - capventis - Oracle RightNow CX Cloud Service</WindowTitle>
        <WindowButtons>
          <button aria-label="Minimize"><Icon name="min" /></button>
          <button aria-label="Restore"><Icon name="restore" /></button>
          <button aria-label="Close"><Icon name="close" /></button>
        </WindowButtons>
      </TitleBar>

      <TabStrip>
        <RibbonTab $w={46}>Home</RibbonTab>
        <RibbonTab $w={89}>Insert Field</RibbonTab>
        <RibbonTab $w={92} $active>Insert Control</RibbonTab>
        <RibbonTab $w={84}>Design</RibbonTab>
        <RibbonTab $w={68}>Rules</RibbonTab>
        <StripTools>
          <button aria-label="Help"><Icon name="help" /></button>
          <button aria-label="Restore workspace"><Icon name="restore" /></button>
          <button aria-label="Close workspace"><Icon name="close" size={14} /></button>
        </StripTools>
      </TabStrip>

      <Ribbon>
        <Group $w={172}>
          <GroupBody>
            <IconGrid>
              {relationship.map(([icon, label]) => (
                <IconButton key={label} aria-label={label}><Icon name={icon} /></IconButton>
              ))}
            </IconGrid>
          </GroupBody>
          <GroupLabel>Relationship Items</GroupLabel>
        </Group>
        <Group $lit>
          <GroupBody>
            <ControlsGrid>
              {controls.map(([icon, label]) => (
                <Cell key={label}>
                  <Control $hot={label === "Browser"}><Icon name={icon} />{label}</Control>
                  {label === "Browser" && (
                    <>
                      <Mark $x={-9} $y={-10} $w={85} $h={40} />
                      <Tooltip role="tooltip">
                        <TipTitle>Browser</TipTitle>
                        <TipText>Insert a browser control that<br />allows you to display a web<br />page in your Workspace or<br />Script.</TipText>
                      </Tooltip>
                    </>
                  )}
                </Cell>
              ))}
            </ControlsGrid>
          </GroupBody>
          <GroupLabel $lit>Controls</GroupLabel>
        </Group>
        <Group $w={121}>
          <GroupBody>
            <BannerOption><Tick type="checkbox" defaultChecked /><Icon name="flag" />Banner Flag</BannerOption>
          </GroupBody>
          <GroupLabel>Banner</GroupLabel>
        </Group>
        <Group $w={165}>
          <GroupBody>
            <AddInRow>
              <Control><Icon name="kb" />KB Workspace Add-in</Control>
              <Scroller>
                <ScrollButton $gap $pale aria-label="Scroll up"><Icon name="caretUp" size={9} /></ScrollButton>
                <ScrollButton aria-label="Scroll down"><Icon name="caretBig" size={9} /></ScrollButton>
                <ScrollButton aria-label="More"><Icon name="more" size={9} /></ScrollButton>
              </Scroller>
            </AddInRow>
          </GroupBody>
          <GroupLabel>Workspace Add-Ins</GroupLabel>
        </Group>
      </Ribbon>

      <Body>
        <Side>
          <SideTitle>Configuration</SideTitle>
          <SideScroll>
            <Sections>
              <SectionHead>Configuration<Icon name="dblUp" /></SectionHead>
              <Tree>
                {tree.map((n) => (
                  <TreeRow key={n.t} $child={n.kind === "child"} $plain={n.kind === "plain"}>
                    {(n.kind === "open" || n.kind === "closed") && (
                      <Expander aria-label={n.kind === "open" ? "Collapse" : "Expand"}>
                        <Svg width="5" height="5" viewBox="0 0 5 5">
                          <path d={n.kind === "open" ? "M0 2.500h5" : "M0 2.500h5M2.500 0v5"} stroke="#2a4a8c" />
                        </Svg>
                      </Expander>
                    )}
                    <Icon name={n.icon} />
                    <Label $selected={n.sel}>{n.t}</Label>
                  </TreeRow>
                ))}
                <TreeFoot><Link href="#customize">Customize List...</Link></TreeFoot>
              </Tree>
              <SectionHead>Recent Items<Icon name="dblUp" /></SectionHead>
            </Sections>
            <Track><Thumb /><Icon name="chevDown" /></Track>
          </SideScroll>
          <Grip><Dots /></Grip>
          {nav.map(([icon, label]) => (
            <NavButton key={label} $active={label === "Configuration"}><Icon name={icon} size={23} />{label}</NavButton>
          ))}
          <SideTools>
            {sideTools.map(([icon, label]) => (
              <IconButton key={label} aria-label={label}><Icon name={icon} /></IconButton>
            ))}
            <SmallCaret aria-label="More buttons"><Icon name="caret" /></SmallCaret>
          </SideTools>
        </Side>

        <Main>
          <BarHead />
          <StatusBar>
            <Status>
              <StatusText>
                <StatusTitle>Logged out</StatusTitle>
                Logged out of the phone
              </StatusText>
              <Icon name="caret" size={12} />
            </Status>
            <Counters>
              <Counter><Icon name="phone" />0</Counter>
              <Counter><Icon name="mail" />0</Counter>
              <Counter><Icon name="globe" />0</Counter>
            </Counters>
          </StatusBar>
          <MediaHead>Live Media Bar</MediaHead>
          <MediaBar>
            <MediaItem $w={74}><MediaButton><Icon name="key" size={32} />Login Chat</MediaButton></MediaItem>
            <MediaItem $w={84} $split>
              <MediaButton $off><Icon name="agent" size={32} />Logged Out</MediaButton>
              <ItemCaret aria-label="Status options"><Icon name="caret" size={12} /></ItemCaret>
            </MediaItem>
            <MediaItem $w={83}><MediaButton $off><Icon name="request" size={32} />Request Chat</MediaButton></MediaItem>
            <MediaItem $w={98} $split><MediaButton $off><Icon name="cancel" size={32} />Cancel Request</MediaButton></MediaItem>
            <MediaItem $w={62} $split><MediaButton $off><Icon name="chats" size={32} />No Chats</MediaButton></MediaItem>
            <MediaItem $w={72}><MediaButton><Icon name="bars" size={32} />Connectivity</MediaButton></MediaItem>
          </MediaBar>
          <DocTabs>
            <DocTab><Icon name="wsArrow" />Workspaces/Workflows Explorer</DocTab>
            <DocTab $active><Icon name="contactDoc" />CapVentis Contact Test</DocTab>
            <Slant width="16" height="23" viewBox="0 0 16 23">
              <path d="M0 .5C5 .5 5 6 9 14c3 6 4 8.500 7 8.500V23H0Z" fill="#fff" /><path d="M0 .5C5 .5 5 6 9 14c3 6 4 8.500 7 8.500" fill="none" stroke="#8ba9d6" />
            </Slant>
            <TabArrows><Icon name="triLeft" size={13} /><Icon name="triRight" size={13} /></TabArrows>
          </DocTabs>
          <Canvas>
            <FlagRow><Icon name="flag" /></FlagRow>
            <Columns>
              <Form onSubmit={(e) => e.preventDefault()}>
                <FormHead>Key Personal Information</FormHead>
                <Spacer />
                <SelectField id="ptitle" label="Person Title" options={["[No Value]"]} />
                <Field>
                  <FieldLabel><label htmlFor="first">F<u>i</u>rst Name</label></FieldLabel>
                  <TextInput id="first" />
                </Field>
                <Field>
                  <FieldLabel><label htmlFor="last">Last <u>N</u>ame</label></FieldLabel>
                  <TextInput id="last" />
                </Field>
                <Field>
                  <FieldLabel $menu><label htmlFor="email"><u>E</u>mail</label><MenuButton aria-label="Email type"><Icon name="caret" /></MenuButton></FieldLabel>
                  <TextInput id="email" $w={190} />
                  <MailButton type="button" aria-label="Send email"><Icon name="openMail" /></MailButton>
                </Field>
                <Field>
                  <FieldLabel $menu><label htmlFor="phone">O<u>f</u>fice Phone</label><MenuButton aria-label="Phone type"><Icon name="caret" /></MenuButton></FieldLabel>
                  <TextInput id="phone" />
                </Field>
                <Field $tall>
                  <FieldLabel><label htmlFor="address"><u>A</u>ddress</label></FieldLabel>
                  <AddressBox>
                    <AddressText id="address" />
                    <EditLink href="#edit">Edit</EditLink>
                  </AddressBox>
                </Field>
                <FormHead>Alerts</FormHead>
                <Spacer />
                <SelectField id="billing" label="Billing Alert" options={["No", "Yes"]} />
                <SelectField id="contract" label="Contract Alert" options={["No", "Yes"]} />
              </Form>

              <TabSet>
                <Tabs>
                  <Slant width="24" height="21" viewBox="0 0 24 21">
                    <path d="M1 21 19 3Q21 1 24 .5V21Z" fill="#f8f8f8" /><path d="M1 21 19 3Q21 .5 24 .5" fill="none" stroke="#3a3a3a" />
                  </Slant>
                  <SlantTab $w={53}>Details</SlantTab>
                  {setTabs.map(([t, w]) => <SetTab key={t} $w={w}>{t}</SetTab>)}
                  <MapTab>
                    <Slant width="22" height="22" viewBox="0 0 22 22">
                      <path d="M0 21 18 3Q20 .5 22 .5V22H0Z" fill="#ececec" /><path d="M0 21 18 3Q20 .5 22 .5" fill="none" stroke="#000" />
                    </Slant>
                    <SlantTab $w={42} $active>Map</SlantTab>
                    <Mark $x={-5} $y={-12} $w={83} $h={51} />
                  </MapTab>
                </Tabs>
                <Frame>
                  <FrameInner>
                    <BrowserArea>
                      <Placeholder>Browser<Mark $x={-23} $y={-20} $w={80} $h={53} /></Placeholder>
                    </BrowserArea>
                  </FrameInner>
                  <FrameArrow aria-label="More tabs"><Icon name="play" size={9} /></FrameArrow>
                </Frame>
              </TabSet>
            </Columns>
          </Canvas>
        </Main>
      </Body>
    </Page>
  );
}
